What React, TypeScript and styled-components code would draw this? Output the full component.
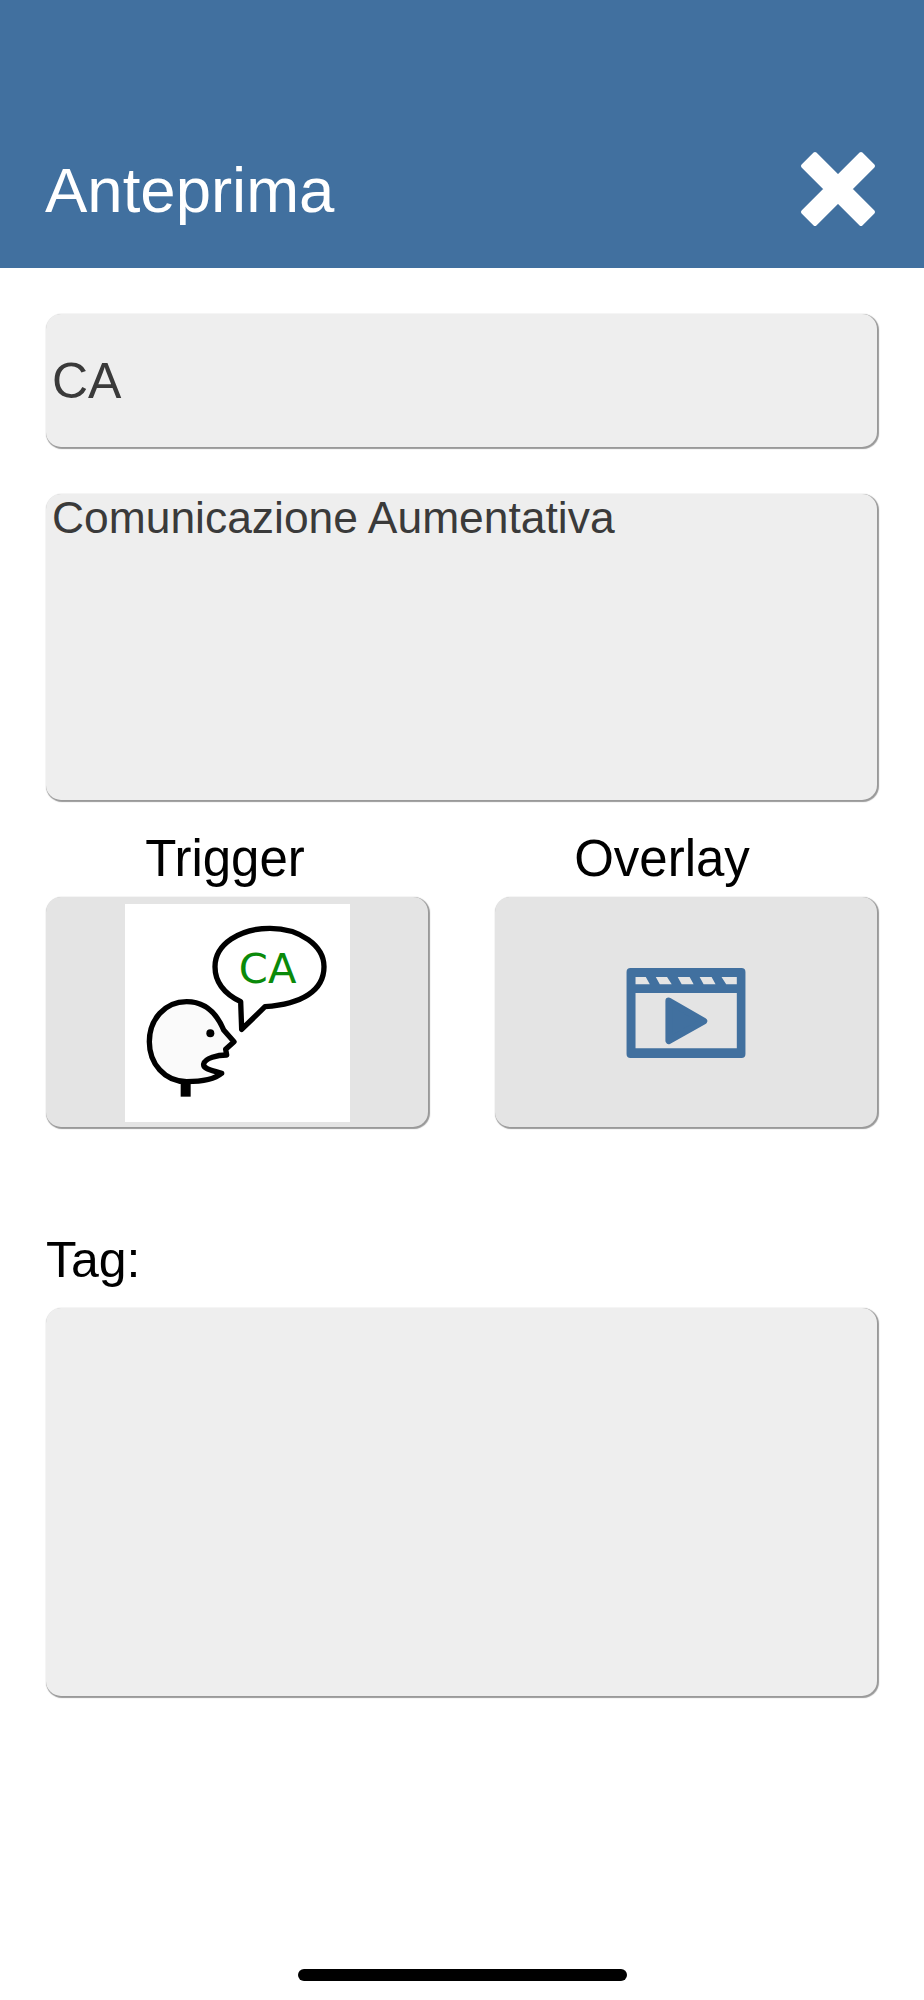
import React from 'react';
import styled, { createGlobalStyle } from 'styled-components';

const GlobalStyle = createGlobalStyle`
  html, body {
    margin: 0;
    padding: 0;
    background: #fff;
    font-family: 'Liberation Sans', Arial, sans-serif;
  }
`;

const Page = styled.div`
  width: 924px;
  height: 2000px;
  display: flex;
  flex-direction: column;
  overflow: hidden;
`;

const Header = styled.header`
  height: 268px;
  box-sizing: border-box;
  background: #41709f;
  display: flex;
  align-items: flex-end;
  justify-content: space-between;
  padding: 0 46px 40px 45px;
`;

const Title = styled.h1`
  margin: 0;
  font-size: 63.5px;
  line-height: 76px;
  font-weight: 400;
  color: #fff;
`;

const CloseButton = styled.button`
  border: 0;
  padding: 0;
  background: none;
  width: 76px;
  height: 76px;
  margin: 0 2px 1px 0;
  display: block;
`;

const Body = styled.main`
  flex: 1;
  display: flex;
  flex-direction: column;
  padding: 46px 47px 0 46px;
`;

const Field = styled.div<{ $height: number; $size: number; $center?: boolean }>`
  height: ${(p) => p.$height}px;
  box-sizing: border-box;
  background: #eee;
  border-radius: 15px;
  box-shadow: 1px 1px 1px 1px #999;
  padding: ${(p) => (p.$center ? '0 6px' : '1px 6px')};
  display: flex;
  align-items: ${(p) => (p.$center ? 'center' : 'flex-start')};
  font-size: ${(p) => p.$size}px;
  line-height: ${(p) => (p.$center ? '60px' : '46px')};
  color: #3a3a3a;
`;

const DescriptionField = styled(Field)`
  margin-top: 47px;
`;

const Media = styled.div`
  margin-top: 30px;
  display: grid;
  grid-template-columns: 382px 382px;
  justify-content: space-between;
`;

const MediaColumn = styled.div`
  display: flex;
  flex-direction: column;
`;

const MediaLabel = styled.div<{ $inset: number }>`
  height: 67px;
  padding-right: ${(p) => p.$inset}px;
  text-align: center;
  font-size: 51px;
  line-height: 57px;
  color: #000;
`;

const MediaButton = styled.div`
  height: 230px;
  background: #e4e4e4;
  border-radius: 15px;
  box-shadow: 1px 1px 1px 1px #999;
  display: flex;
  align-items: center;
  justify-content: center;
`;

const TriggerImage = styled.svg`
  width: 225px;
  height: 218px;
  display: block;
  background: #fff;
  margin-top: 2px;
`;

const OverlayIcon = styled.svg`
  width: 120px;
  height: 90px;
  display: block;
  margin: 1px 0 0 -1px;
`;

const TagLabel = styled.div`
  margin-top: 105px;
  font-size: 50px;
  line-height: 57px;
  color: #000;
`;

const TagField = styled(Field)`
  margin-top: 19px;
`;

const HomeBar = styled.div`
  width: 329px;
  height: 12px;
  border-radius: 6px;
  background: #000;
  margin: 0 auto 19px;
`;

const App = () => {
  return (
    <Page>
      <GlobalStyle />
      <Header>
        <Title>Anteprima</Title>
        <CloseButton type="button" aria-label="Chiudi">
          <svg width="76" height="76" viewBox="0 0 76 76">
            <path
              d="M3 15 L15 3 L38 26 L61 3 L73 15 L50 38 L73 61 L61 73 L38 50 L15 73 L3 61 L26 38 Z"
              fill="#fff"
              stroke="#fff"
              strokeWidth="4"
              strokeLinejoin="round"
            />
          </svg>
        </CloseButton>
      </Header>
      <Body>
        <Field $height={133} $size={50} $center>
          CA
        </Field>
        <DescriptionField $height={306} $size={44.4}>
          Comunicazione Aumentativa
        </DescriptionField>
        <Media>
          <MediaColumn>
            <MediaLabel $inset={24}>Trigger</MediaLabel>
            <MediaButton>
              <TriggerImage viewBox="0 0 675 654">
                <path
                  d="M347 293 C300 270 270 235 270 188 C270 120 345 73 435 73 C525 73 597 125 597 188 C597 260 530 300 420 308 L350 376 Z"
                  fill="#fff"
                  stroke="#000"
                  strokeWidth="16"
                  strokeLinejoin="round"
                />
                <text
                  x="428"
                  y="238"
                  textAnchor="middle"
                  fontFamily="'DejaVu Sans', sans-serif"
                  fontSize="125"
                  fill="#0a8a0a"
                >
                  CA
                </text>
                <path
                  d="M185 293 C245 293 278 335 296 378 L327 413 L302 436 L305 453 C278 453 240 462 236 480 C234 494 255 497 290 508 C270 525 235 533 185 533 C119 533 73 479 73 413 C73 347 119 293 185 293 Z"
                  fill="#fafafa"
                  stroke="#000"
                  strokeWidth="16"
                  strokeLinejoin="round"
                />
                <circle cx="256" cy="388" r="12" fill="#000" />
                <rect x="167" y="538" width="30" height="40" fill="#000" />
              </TriggerImage>
            </MediaButton>
          </MediaColumn>
          <MediaColumn>
            <MediaLabel $inset={48}>Overlay</MediaLabel>
            <MediaButton>
              <OverlayIcon viewBox="0 0 358 271">
                <path
                  fillRule="evenodd"
                  fill="#41709f"
                  d="M12 0 H346 A12 12 0 0 1 358 12 V259 A12 12 0 0 1 346 271 H12 A12 12 0 0 1 0 259 V12 A12 12 0 0 1 12 0 Z
                     M27 75 V242 H332 V75 Z
                     M27 27 V49 H70 L58 27 Z
                     M88 27 L100 49 H136 L122 27 Z
                     M154 27 L166 49 H202 L190 27 Z
                     M220 27 L232 49 H268 L256 27 Z
                     M286 27 L300 49 H332 V27 Z"
                />
                <path
                  d="M127 99 L233 160 L127 219 Z"
                  fill="#41709f"
                  stroke="#41709f"
                  strokeWidth="20"
                  strokeLinejoin="round"
                />
              </OverlayIcon>
            </MediaButton>
          </MediaColumn>
        </Media>
        <TagLabel>Tag:</TagLabel>
        <TagField $height={388} $size={44} />
      </Body>
      <HomeBar />
    </Page>
  );
};

export default App;
